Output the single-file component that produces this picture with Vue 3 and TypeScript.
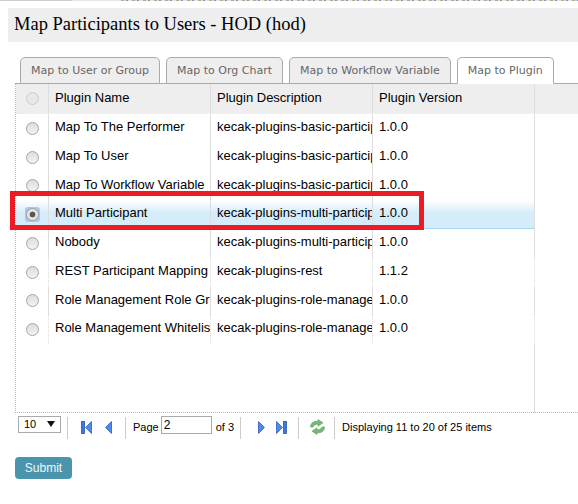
<script setup lang="ts">
interface PluginRow {
  name: string
  description: string
  version: string
  selected?: boolean
  dotted?: boolean
}

const tabs = ['Map to User or Group', 'Map to Org Chart', 'Map to Workflow Variable', 'Map to Plugin']

const rows: PluginRow[] = [
  { name: 'Map To The Performer', description: 'kecak-plugins-basic-participants', version: '1.0.0' },
  { name: 'Map To User', description: 'kecak-plugins-basic-participants', version: '1.0.0' },
  { name: 'Map To Workflow Variable', description: 'kecak-plugins-basic-participants', version: '1.0.0' },
  { name: 'Multi Participant', description: 'kecak-plugins-multi-participants', version: '1.0.0', selected: true },
  { name: 'Nobody', description: 'kecak-plugins-multi-participants', version: '1.0.0' },
  { name: 'REST Participant Mapping', description: 'kecak-plugins-rest', version: '1.1.2', dotted: true },
  { name: 'Role Management Role Group', description: 'kecak-plugins-role-management', version: '1.0.0' },
  { name: 'Role Management Whitelist', description: 'kecak-plugins-role-management', version: '1.0.0', dotted: true }
]
</script>

<template>
  <div class="page">
    <div class="top-strip"></div>
    <h1 class="title">Map Participants to Users - HOD (hod)</h1>

    <div class="tabs">
      <div v-for="(tab, i) in tabs" :key="tab" class="tab" :class="{ active: i === 3 }">{{ tab }}</div>
    </div>

    <div class="grid">
      <div class="row head">
        <div class="cell check"><span class="radio disabled"></span></div>
        <div class="cell">Plugin Name</div>
        <div class="cell">Plugin Description</div>
        <div class="cell">Plugin Version</div>
      </div>
      <div v-for="row in rows" :key="row.name" class="row" :class="{ selected: row.selected, dotted: row.dotted }">
        <div class="cell check">
          <span class="radio" :class="{ on: row.selected }"></span>
        </div>
        <div class="cell">{{ row.name }}</div>
        <div class="cell">{{ row.description }}</div>
        <div class="cell">{{ row.version }}</div>
      </div>
      <div class="filler"></div>
      <div class="highlight"></div>
    </div>

    <div class="pager">
      <div class="size">10<span class="caret"></span></div>
      <span class="sep first-sep"></span>
      <svg class="ico" width="11" height="13" viewBox="0 0 11 13">
        <rect x="0.5" y="0.5" width="3" height="12" fill="#3f78d8" stroke="#2a55a8" stroke-width="0.8" />
        <path d="M10.5 0.5V12.5L4.5 6.5Z" fill="#4f8ae6" stroke="#2a5fc0" stroke-width="0.8" />
      </svg>
      <svg class="ico prev" width="7" height="13" viewBox="0 0 7 13">
        <path d="M6.5 0.5V12.5L0.5 6.5Z" fill="#4f8ae6" stroke="#2a5fc0" stroke-width="0.8" />
      </svg>
      <span class="sep"></span>
      <span class="page-label">Page</span>
      <input class="page-input" value="2" />
      <span class="of">of 3</span>
      <span class="sep"></span>
      <svg class="ico next" width="7" height="13" viewBox="0 0 7 13">
        <path d="M0.5 0.5V12.5L6.5 6.5Z" fill="#4f8ae6" stroke="#2a5fc0" stroke-width="0.8" />
      </svg>
      <svg class="ico last" width="11" height="13" viewBox="0 0 11 13">
        <path d="M0.5 0.5V12.5L6.5 6.5Z" fill="#4f8ae6" stroke="#2a5fc0" stroke-width="0.8" />
        <rect x="7.5" y="0.5" width="3" height="12" fill="#3f78d8" stroke="#2a55a8" stroke-width="0.8" />
      </svg>
      <span class="sep after-last"></span>
      <svg class="ico refresh" width="17" height="16" viewBox="0 0 17 16">
        <path d="M1.5 8C1.5 4 5 1.6 9 2.3V0.5L14 3.8L9 7.2V5.3C6.8 4.9 5 5.8 4 8Z" fill="#74bb70" stroke="#5aa05a" stroke-width="0.6" />
        <path d="M15.5 8C15.5 12 12 14.4 8 13.7V15.5L3 12.2L8 8.8V10.7C10.2 11.1 12 10.2 13 8Z" fill="#74bb70" stroke="#5aa05a" stroke-width="0.6" />
      </svg>
      <span class="sep after-refresh"></span>
      <span class="info">Displaying 11 to 20 of 25 items</span>
    </div>

    <button class="submit" type="button">Submit</button>
  </div>
</template>

<style>
html,
body {
  margin: 0;
  background: #fff;
}
</style>

<style scoped>
.page {
  width: 578px;
  height: 504px;
  overflow: hidden;
  position: relative;
  font-family: "Liberation Sans", Arial, sans-serif;
  font-size: 12px;
  color: #000;
}

/* the bottom edge of the page behind the dialog, only 1px shows */
.top-strip {
  height: 1px;
  margin-bottom: 7px;
  background:
    linear-gradient(90deg, #ccc 0 72px, #e6e6e6 72px 118px, transparent 118px) no-repeat,
    repeating-linear-gradient(90deg, #b9a88c 0 3px, #d8d8d8 3px 5px, #8a94b0 5px 7px, #e4e4e4 7px 11px);
}

.title {
  margin: 0 0 0 8px;
  height: 34px;
  line-height: 32px;
  padding-left: 6px;
  background: #eee;
  font-family: "Liberation Serif", Georgia, serif;
  font-size: 18.5px;
  font-weight: 400;
}

.tabs {
  display: flex;
  gap: 6px;
  margin: 15px 0 0 15px;
  padding-left: 5px;
  height: 26px;
  border-bottom: 1px solid #aaa;
}

.tab {
  box-sizing: border-box;
  height: 27px;
  padding: 0 10px;
  line-height: 26px;
  border: 1px solid #aaa;
  border-bottom-color: #aaa;
  border-radius: 5px 5px 0 0;
  background: #eee;
  color: #666;
  font-family: "DejaVu Sans", Verdana, sans-serif;
  font-size: 11px;
  white-space: nowrap;
}

.tab.active {
  background: #fff;
  border-bottom-color: #fff;
}

.grid {
  position: relative;
  height: 328px;
  margin-left: 15px;
  border-left: 1px dotted #bbb;
  border-bottom: 1px dotted #bbb;
}

.row {
  display: grid;
  grid-template-columns: 33px 162px 162px 162px;
  height: 28.75px;
  line-height: 26px;
}

.row.head {
  height: 30px;
  background: #eee;
  line-height: 27px;
}

.row.head::after {
  content: "";
  border-left: 1px solid #ddd;
}

.row.selected {
  background: linear-gradient(#fff, #d5ecfa 45%, #d5ecfa);
  box-shadow: inset 0 -1px 0 #a8d8ee;
  width: 519px;
}

.cell {
  box-sizing: border-box;
  padding-left: 6px;
  border-right: 1px solid #ddd;
  overflow: hidden;
  white-space: nowrap;
  font-size: 13px;
}

.row.dotted .cell {
  border-right-style: dotted;
}

.filler {
  box-sizing: border-box;
  width: 519px;
  height: 69px;
  border-right: 1px solid #ddd;
}

.check {
  display: flex;
  align-items: center;
  justify-content: center;
  padding: 0;
}

.radio {
  box-sizing: border-box;
  width: 13px;
  height: 13px;
  border-radius: 50%;
  border: 1px solid #a5a5a5;
  background: linear-gradient(#ddd, #f2f2f2);
}

.radio.disabled {
  border-color: #ccc;
  background: #e8e8e8;
}

.radio.on {
  width: 15px;
  height: 15px;
  border: none;
  border-radius: 3px;
  background: radial-gradient(circle, #555 0 2.6px, #e3e3e3 3.2px 5.2px, #a5a5a5 5.8px 6.2px, #a9c8f5 6.8px);
}

.highlight {
  position: absolute;
  left: -6px;
  top: 107px;
  box-sizing: border-box;
  width: 414px;
  height: 39px;
  border: 5px solid #ed1c24;
}

.pager {
  display: flex;
  align-items: center;
  height: 24px;
  margin: 3px 0 0 18px;
  font-size: 11px;
}

.ico,
.page-label,
.of,
.info {
  margin-bottom: 2px;
}

.size {
  box-sizing: border-box;
  position: relative;
  width: 43px;
  height: 17px;
  line-height: 15px;
  padding-left: 5px;
  border: 1px solid #aaa;
  margin-bottom: 7px;
}

.caret {
  position: absolute;
  right: 5px;
  top: 4px;
  border: 4px solid transparent;
  border-top: 6px solid #111;
  border-bottom: 0;
}

.sep {
  width: 1px;
  height: 22px;
  background: #ccc;
  margin: 0 7px 0 6px;
}

.first-sep {
  margin-right: 13px;
}

.prev {
  margin: 0 7px 2px 13px;
}

.page-label {
  margin-right: 2px;
}

.page-input {
  box-sizing: border-box;
  width: 51px;
  height: 18px;
  padding: 0 2px;
  border: 1px solid #aaa;
  font: 12px "Liberation Sans", Arial, sans-serif;
  margin-bottom: 6px;
  outline: none;
}

.of {
  margin-left: 4px;
}

.next {
  margin: 0 11px 2px 10px;
}

.after-last {
  margin-left: 11px;
  margin-right: 10px;
}

.after-refresh {
  margin-left: 8px;
}

.submit {
  display: block;
  width: 57px;
  height: 22px;
  margin: 17px 0 0 15px;
  padding: 0;
  border: none;
  border-radius: 4px;
  background: #4a94ae;
  color: #eef7fa;
  font: 12px "Liberation Sans", Arial, sans-serif;
}
</style>
